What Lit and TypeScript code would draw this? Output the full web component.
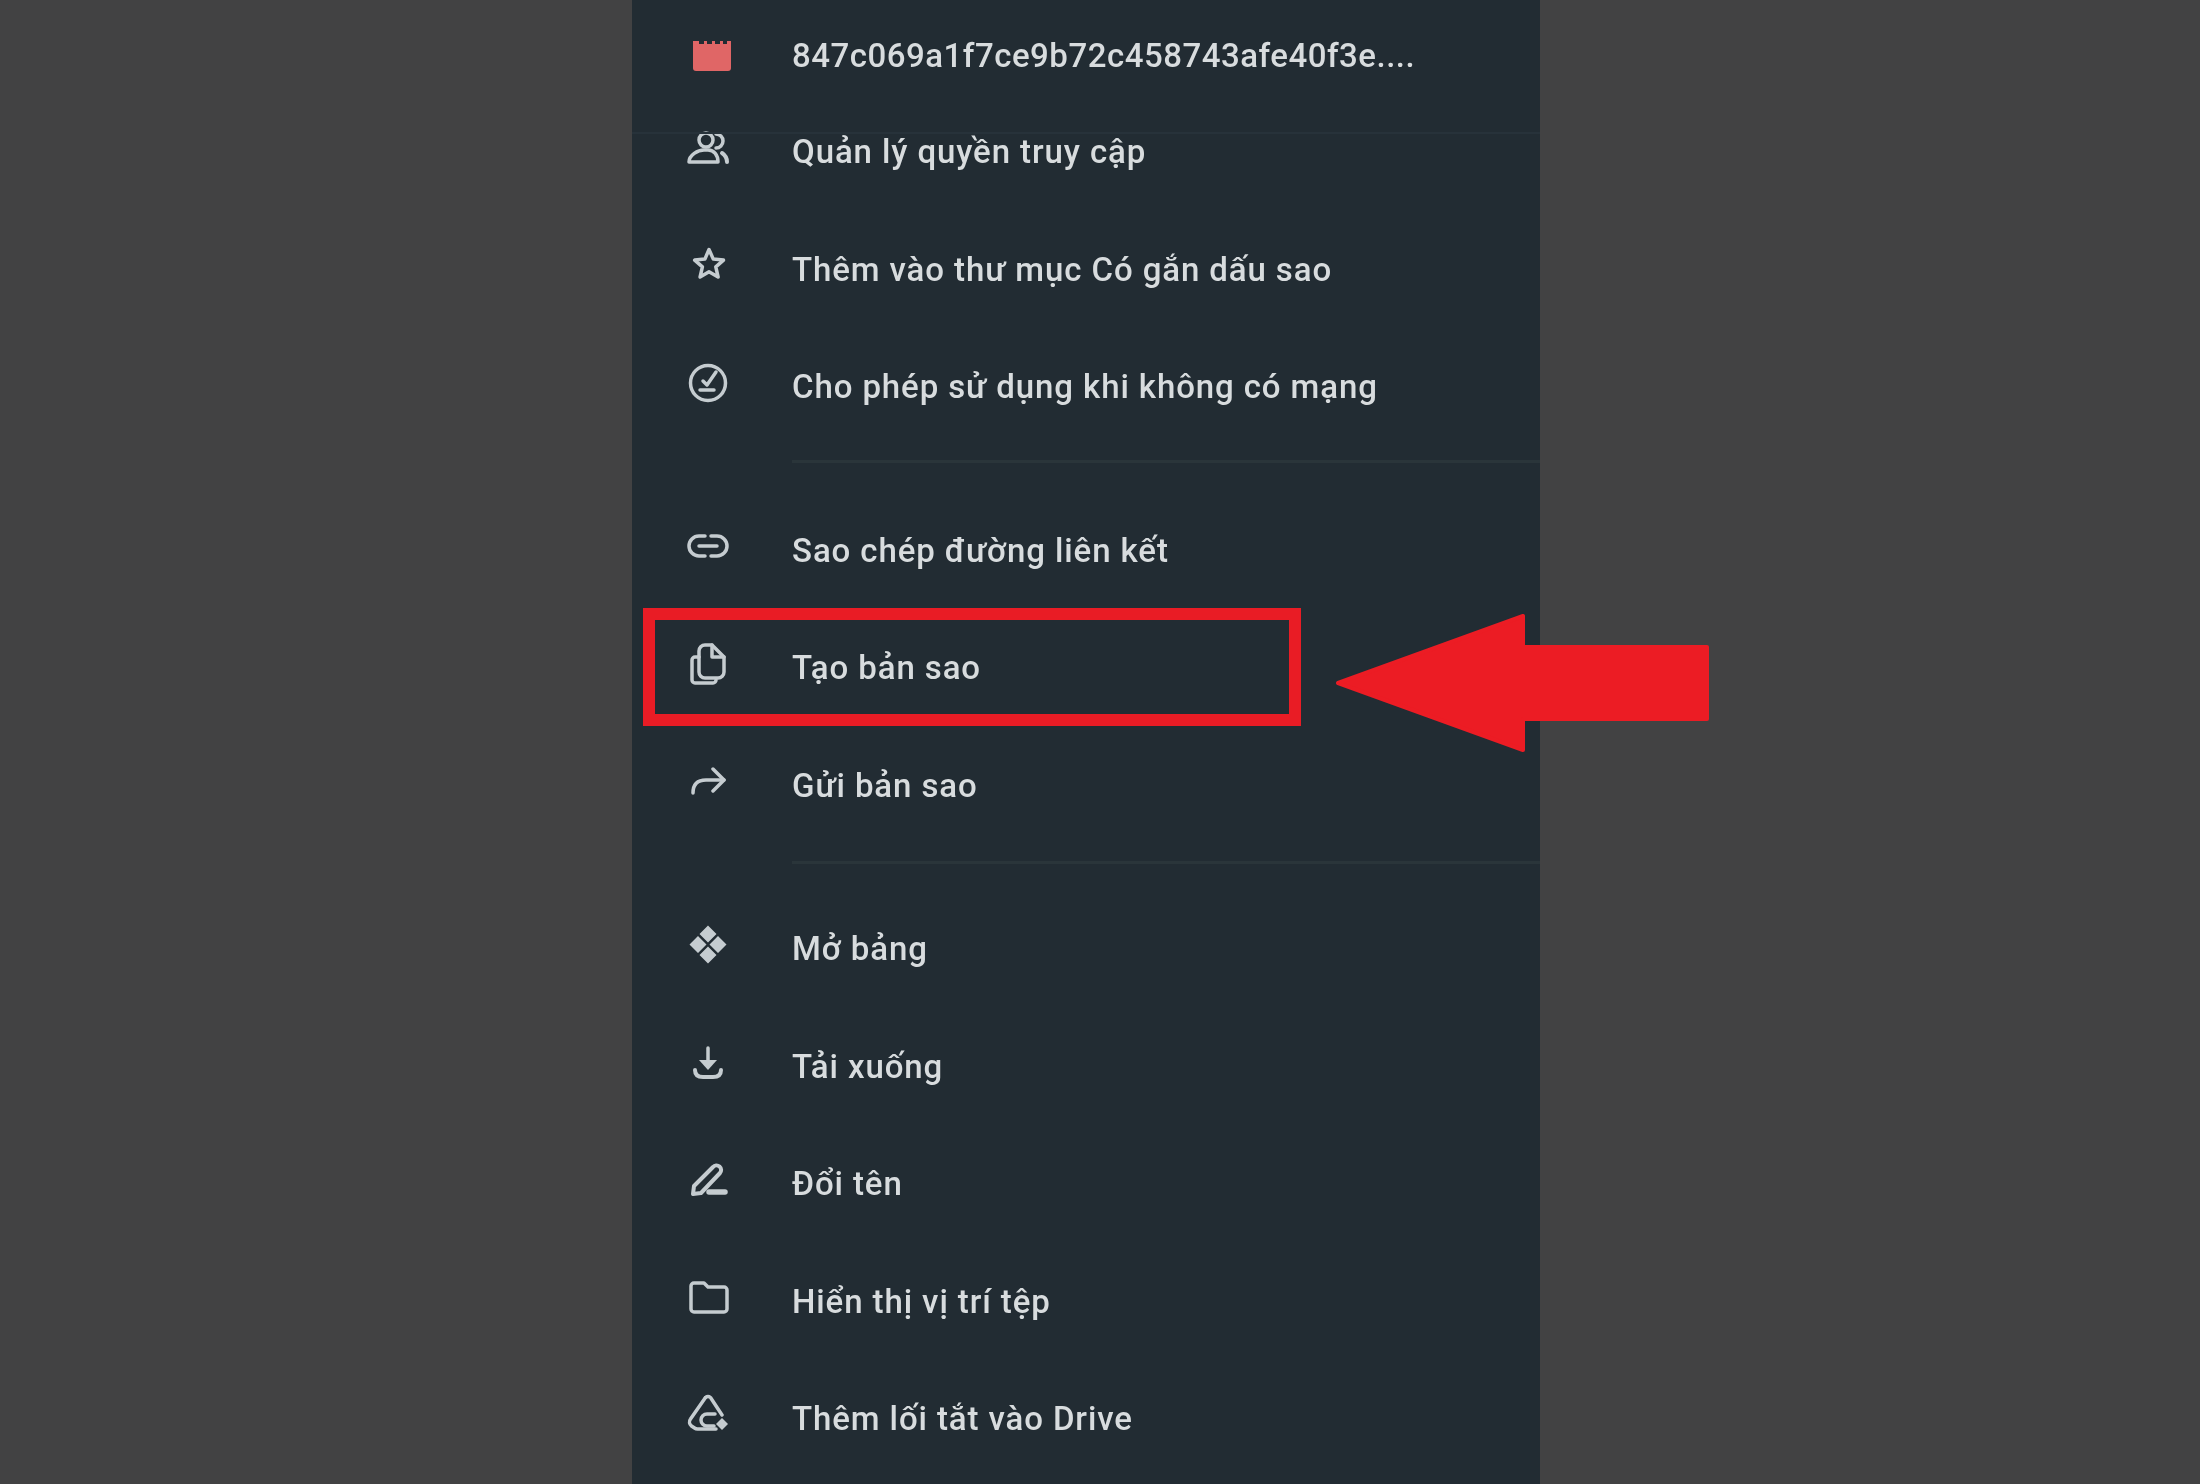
import { LitElement, html, svg, css } from "lit";
import { customElement } from "lit/decorators.js";

// icons are drawn in a 48x48 box, the box sits centred on the row
const icons = {
  file: svg`<path class="red" d="M9 10h38v27a3 3 0 0 1-3 3H12a3 3 0 0 1-3-3z"/><path class="notch" d="M15 10h5v3h-5zM23 10h5v3h-5zM31 10h5v3h-5zM39 10h4v3h-4z"/>`,
  people: svg`<circle cx="22" cy="14" r="7"/><path d="M5 36c0-7 9-12 15-12h4c6 0 10 5 10 12z"/><path d="M32 8a7 7 0 0 1 0 14"/><path class="thick" d="M38 27c3 2 5 5 5 9"/>`,
  star: svg`<path transform="translate(1 -3.500)" d="M24 10l4.300 9.600 10.200 1-7.700 6.800 2.300 10.100L24 32.300l-8.900 5.200 2.300-10.100-7.700-6.800 10.200-1z"/>`,
  offline: svg`<circle cx="24" cy="22" r="17.500"/><path d="M19 20l4 4 9-13"/><path d="M16 29h14"/>`,
  link: svg`<path d="M21 32h-6a10 10 0 0 1 0-20h6"/><path d="M27 12h6a10 10 0 0 1 0 20h-6"/><path d="M15 22h18"/>`,
  copy: svg`<path d="M15 15h-4a3 3 0 0 0-3 3v20a3 3 0 0 0 3 3h18a3 3 0 0 0 3-3"/><path d="M15 9a6 6 0 0 1 6-6h7l12 12v15a6 6 0 0 1-6 6H21a6 6 0 0 1-6-6z"/><path d="M28 3v12h12"/>`,
  send: svg`<path d="M9 34c0-8 4-13 13-13h18"/><path d="M29 10l11 11-11 11"/>`,
  open: svg`<path class="fill" d="M24 2.500l8.500 8.500L24 19.500 15.500 11zM14 13l8.500 8.500L14 30l-8.500-8.500zM34 13l8.500 8.500L34 30l-8.500-8.500zM24 23.500l8.500 8.500L24 40.500 15.500 32z"/>`,
  download: svg`<path d="M24 8v16"/><path class="fill" d="M15 20h18l-9 10z"/><path class="thick" d="M11 30c0 6 4 7 8 7h10c4 0 8-1 8-7"/>`,
  rename: svg`<path class="thick" d="M9 36l1-8L29 9a4.500 4.500 0 0 1 7 6L17 35z"/><path class="fat" d="M25 34h16"/>`,
  folder: svg`<path d="M7 11a3 3 0 0 1 3-3h10l4 4h16a3 3 0 0 1 3 3v19a3 3 0 0 1-3 3H10a3 3 0 0 1-3-3z"/>`,
  drive: svg`<path d="M21.500 4.500L6.500 26a5 5 0 0 0 1 7l3 2a5 5 0 0 0 3 1H32"/><path d="M21.500 4.500a4 4 0 0 1 5 0L38 22"/><path d="M31 21h-8a6 6 0 0 0 0 12h7"/><path class="fill" d="M38 25l6 6-6 6-6-6z"/>`,
};

type Item = { label: string; icon: keyof typeof icons };

const groups: Item[][] = [
  [
    { label: "Quản lý quyền truy cập", icon: "people" },
    { label: "Thêm vào thư mục Có gắn dấu sao", icon: "star" },
    { label: "Cho phép sử dụng khi không có mạng", icon: "offline" },
  ],
  [
    { label: "Sao chép đường liên kết", icon: "link" },
    { label: "Tạo bản sao", icon: "copy" },
    { label: "Gửi bản sao", icon: "send" },
  ],
  [
    { label: "Mở bảng", icon: "open" },
    { label: "Tải xuống", icon: "download" },
    { label: "Đổi tên", icon: "rename" },
    { label: "Hiển thị vị trí tệp", icon: "folder" },
    { label: "Thêm lối tắt vào Drive", icon: "drive" },
  ],
];

@customElement("app-root")
export class AppRoot extends LitElement {
  static styles = css`
    :host {
      display: block;
      height: 1484px;
      overflow: hidden;
      position: relative;
      background: #424243;
      font-family: Roboto, "Liberation Sans", sans-serif;
    }
    .panel {
      width: 908px;
      height: 1484px;
      margin-left: 632px;
      background: #222c33;
      position: relative;
      color: #d8dcde;
    }
    .head {
      height: 72px;
      padding-top: 19px;
      display: flex;
      align-items: center;
      padding-left: 52px;
    }
    .row {
      height: 117.5px;
      display: flex;
      align-items: center;
      padding-left: 52px;
    }
    .name,
    .label {
      font-size: 33px;
      font-weight: 500;
      white-space: nowrap;
      filter: blur(0.5px);
    }
    .name {
      letter-spacing: 0.5px;
    }
    .label {
      letter-spacing: 0.9px;
      position: relative;
      top: 2px;
    }
    .ico {
      width: 48px;
      height: 48px;
      margin-right: 60px;
      flex: none;
      fill: none;
      stroke: #c5ccd0;
      stroke-width: 3.500;
      stroke-linecap: round;
      stroke-linejoin: round;
      filter: blur(0.5px);
    }
    .ico .fill {
      fill: #c5ccd0;
      stroke: none;
    }
    .ico .thick {
      stroke-width: 4;
    }
    .ico .fat {
      stroke-width: 5.500;
    }
    .ico .red {
      fill: #e06666;
      stroke: none;
    }
    .ico .notch {
      fill: #222c33;
      stroke: none;
    }
    .sep {
      height: 3px;
      margin: 16px 0 27px 160px;
      background: #2a353a;
    }
    .sep.second {
      margin: 19px 0 24px 160px;
    }
    .topline {
      position: absolute;
      left: 0;
      right: 0;
      top: 132px;
      height: 2px;
      background: #27323a;
    }
    .box {
      position: absolute;
      left: 11px;
      top: 608px;
      width: 658px;
      height: 118px;
      box-sizing: border-box;
      border: 12px solid #e91c25;
    }
    .arrow {
      position: absolute;
      left: 1335px;
      top: 613px;
      width: 374px;
      height: 140px;
      fill: #ec1c24;
      stroke: #ec1c24;
      stroke-width: 4;
      stroke-linejoin: round;
    }
  `;

  renderRow(item: Item) {
    return html`<div class="row">
      <svg class="ico" viewBox="0 0 48 48">${icons[item.icon]}</svg>
      <span class="label">${item.label}</span>
    </div>`;
  }

  render() {
    return html`
      <div class="panel">
        <div class="head">
          <svg class="ico" viewBox="0 0 48 48">${icons.file}</svg>
          <span class="name">847c069a1f7ce9b72c458743afe40f3e....</span>
        </div>
        ${groups[0].map((i) => this.renderRow(i))}
        <div class="sep"></div>
        ${groups[1].map((i) => this.renderRow(i))}
        <div class="sep second"></div>
        ${groups[2].map((i) => this.renderRow(i))}
        <div class="topline"></div>
        <div class="box"></div>
      </div>
      <svg class="arrow" viewBox="0 0 374 140">
        <path d="M3 70L188 3v31h184v72H188v31z" />
      </svg>
    `;
  }
}
